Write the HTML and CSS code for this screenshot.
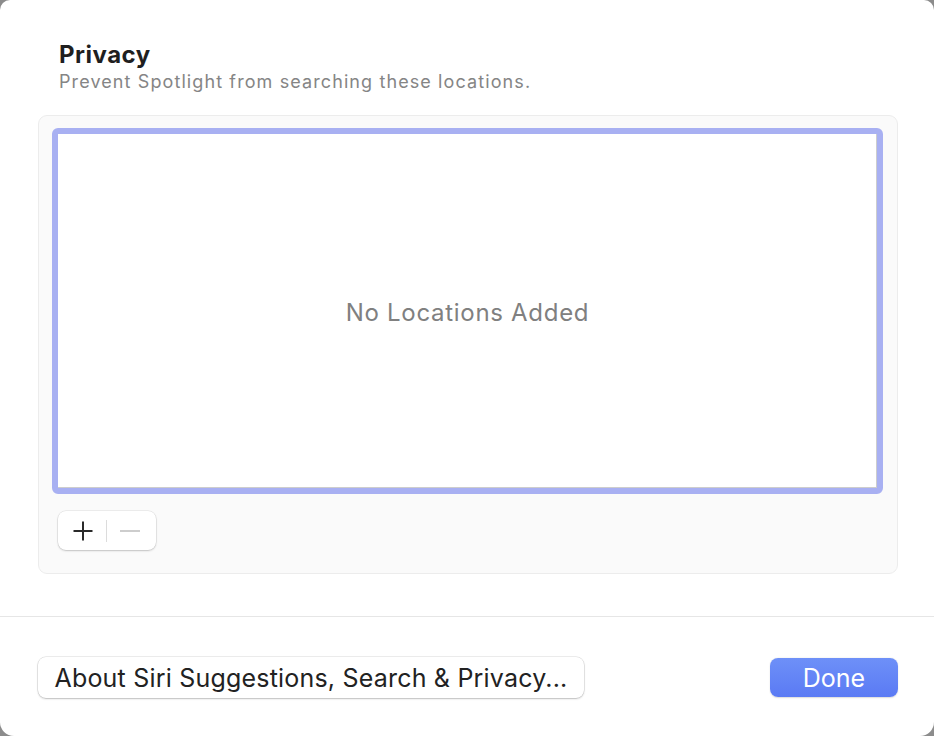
FILE: index.html
```html
<!DOCTYPE html>
<html>
<head>
<meta charset="utf-8">
<link rel="stylesheet" href="styles.css">
</head>
<body>
<div class="window">
  <div class="main">
    <div class="heading">
      <h1 class="title">Privacy</h1>
      <p class="subtitle">Prevent Spotlight from searching these locations.</p>
    </div>
    <div class="panel">
      <div class="list">
        <div class="list-inner">
          <span class="empty">No Locations Added</span>
        </div>
      </div>
      <div class="seg">
        <button class="seg-btn plus" aria-label="Add">
          <svg width="22" height="22" viewBox="0 0 22 22"><path d="M11 1.5v19M1.5 11h19" stroke="#2a2a2a" stroke-width="2" fill="none"/></svg>
        </button>
        <span class="seg-div"></span>
        <button class="seg-btn minus" aria-label="Remove">
          <svg width="22" height="22" viewBox="0 0 22 22"><path d="M1 11h20" stroke="#bdbdbd" stroke-width="1.6" fill="none"/></svg>
        </button>
      </div>
    </div>
  </div>
  <div class="footer">
    <button class="btn about">About Siri Suggestions, Search &amp; Privacy...</button>
    <button class="btn done">Done</button>
  </div>
</div>
</body>
</html>
```
FILE: styles.css
```css
html, body {
  margin: 0;
  padding: 0;
}
body {
  background: #8c8c8c;
  font-family: Inter, "Noto Sans", sans-serif;
}
.window {
  width: 934px;
  height: 736px;
  background: #ffffff;
  border-radius: 10px 10px 14px 14px;
  overflow: hidden;
  display: flex;
  flex-direction: column;
  box-sizing: border-box;
}
.main {
  padding: 40px 36px 0 38px;
  height: 617px;
  box-sizing: border-box;
  border-bottom: 1px solid #e6e6e6;
}
.heading {
  padding-left: 21px;
  height: 75px;
}
.title {
  margin: 0;
  font-size: 24px;
  line-height: 29px;
  font-weight: 700;
  color: #1f1f1f;
  letter-spacing: 0.5px;
}
.subtitle {
  margin: 0;
  font-size: 18px;
  line-height: 25px;
  color: #858585;
  letter-spacing: 1.1px;
}
.panel {
  height: 459px;
  box-sizing: border-box;
  background: #fafafa;
  border: 1px solid #ececec;
  border-radius: 9px;
  padding: 12px 14px 0 13px;
}
.list {
  height: 366px;
  box-sizing: border-box;
  border: 6px solid #a8b0f2;
  border-radius: 6px;
  background: #ffffff;
}
.list-inner {
  height: 100%;
  display: flex;
  align-items: center;
  justify-content: center;
  box-shadow: inset -1px -1px 0 #cdcdcd;
}
.empty {
  font-size: 24px;
  color: #808080;
  letter-spacing: 0.7px;
  padding-top: 2px;
}
.seg {
  margin-top: 17px;
  margin-left: 6px;
  width: 98px;
  height: 39px;
  box-sizing: border-box;
  background: #ffffff;
  border-radius: 8px;
  box-shadow: 0 0 0 0.5px rgba(0,0,0,0.10), 0 1px 2px rgba(0,0,0,0.18);
  display: flex;
  align-items: center;
}
.seg-btn {
  border: 0;
  background: transparent;
  padding: 0;
  width: 48px;
  height: 39px;
  display: flex;
  align-items: center;
  justify-content: center;
}
.plus { padding-left: 2px; }
.minus { padding-right: 2px; }
.seg-div {
  width: 1px;
  height: 22px;
  background: #dcdcdc;
}
.footer {
  flex: 1;
  display: flex;
  justify-content: space-between;
  align-items: flex-start;
  padding: 40px 36px 0 38px;
}
.btn {
  font-family: Inter, "Noto Sans", sans-serif;
  font-size: 25px;
  border-radius: 8px;
  padding: 0;
  cursor: default;
}
.about {
  width: 546px;
  height: 41px;
  background: #ffffff;
  color: #222222;
  border: 0;
  letter-spacing: 0.2px;
  box-shadow: 0 0 0 0.5px rgba(0,0,0,0.14), 0 1px 2px rgba(0,0,0,0.2);
}
.done {
  margin-top: 1px;
  width: 128px;
  height: 39px;
  border: 0;
  color: #ffffff;
  background: linear-gradient(#6e90f8, #5a7af4);
  box-shadow: 0 0.5px 1.5px rgba(0,0,0,0.15);
}
```
